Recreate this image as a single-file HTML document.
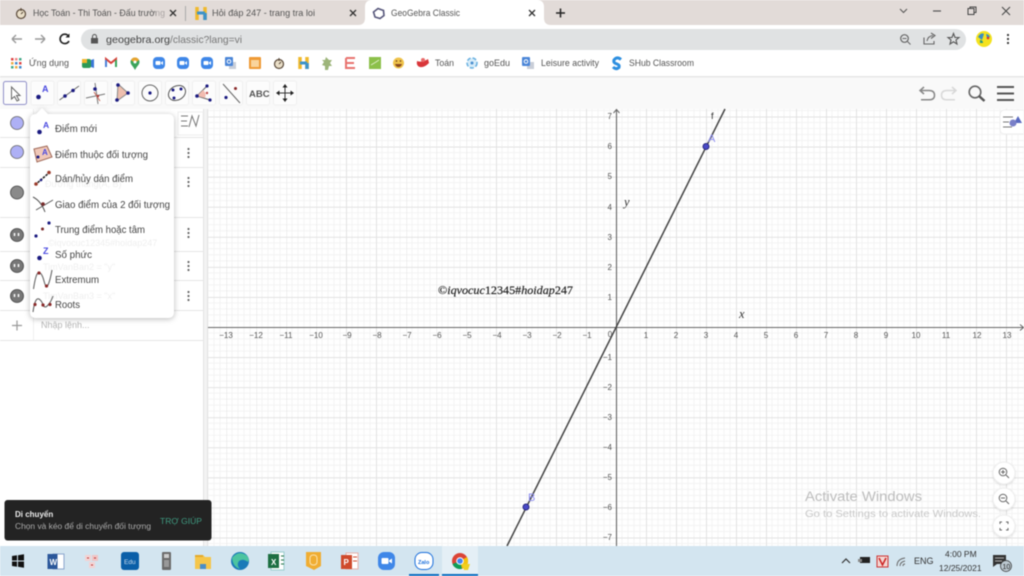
<!DOCTYPE html>
<html lang="vi"><head><meta charset="utf-8"><title>GeoGebra Classic</title>
<style>
html,body{margin:0;padding:0;width:1024px;height:576px;overflow:hidden;background:#fff}
svg{display:block;filter:blur(.5px)}
text{font-family:"Liberation Sans",sans-serif;fill:#555;font-size:9.5px}
.ax text,.ax{font-size:8px;fill:#555;text-anchor:middle}
.ay text{font-size:8px;fill:#555;text-anchor:end}
.bm{font-size:9px;fill:#555}
.m{font-size:10px;fill:#444}
.b{fill:#fcfcfc;stroke:#f0f0f0}
.gh{font-size:9px;fill:#efefef}
</style></head><body>
<svg width="1024" height="576" viewBox="0 0 1024 576" xmlns="http://www.w3.org/2000/svg">
<defs>
<pattern id="g" patternUnits="userSpaceOnUse" x="616" y="327" width="30" height="30.07">
<path d="M6 0V31M12 0V31M18 0V31M24 0V31M0 6H30M0 12H30M0 18H30M0 24H30" stroke="#f3f3f3" stroke-width="1" fill="none"/>
<path d="M.5 0V31M0 .5H30" stroke="#e2e2e2" stroke-width="1" fill="none"/>
</pattern>
</defs>
<rect width="1024" height="576" fill="#fff"/>
<!-- tab strip -->
<rect width="1024" height="25" fill="#e2dbd8"/>
<path d="M358 25q7 0 7-7V7q0-7 7-7H537q7 0 7 7V18q0 7 7 7Z" fill="#fff"/>
<circle cx="21" cy="14" r="4.5" fill="#eadfc8" stroke="#5a4a3a" stroke-width="1.2"/><path d="M21 8V11M21 14L23 12" stroke="#5a4a3a"/>
<text x="33" y="16" textLength="132" lengthAdjust="spacingAndGlyphs">Học Toán - Thi Toán - Đấu trường</text>
<rect x="156" y="5" width="10" height="16" fill="#e2dbd8" opacity=".6"/>
<path d="M170 10L176 16M176 10L170 16" stroke="#333" stroke-width="1.3"/>
<rect x="185" y="6" width="1" height="15" fill="#aaa"/>
<path d="M197 7V20M205 7V20" stroke="#f0b92c" stroke-width="3.5"/><path d="M197 13H205" stroke="#3c93c9" stroke-width="3"/><path d="M205 13V20" stroke="#3c93c9" stroke-width="3.5"/>
<text x="212" y="16" textLength="103" lengthAdjust="spacingAndGlyphs">Hỏi đáp 247 - trang tra loi</text>
<path d="M350 10L356 16M356 10L350 16" stroke="#333" stroke-width="1.3"/>
<path d="M378 8.500L383.500 10.500L384 15.500L380 18.500L375 17L373.500 12Z" fill="#fff" stroke="#56567a" stroke-width="1.600"/>
<text x="391" y="16" textLength="69" lengthAdjust="spacingAndGlyphs">GeoGebra Classic</text>
<path d="M529 10L535 16M535 10L529 16" stroke="#333" stroke-width="1.3"/>
<path d="M560.500 8.500V17.500M556 13H565" stroke="#222" stroke-width="1.500"/>
<path d="M900 9L903.500 12.500L907 9" stroke="#555" fill="none"/>
<path d="M933 11H941" stroke="#555" stroke-width="1.200"/>
<rect x="968" y="8.500" width="6" height="6" fill="none" stroke="#444"/><path d="M970 8.500V7H976V12.500H974" fill="none" stroke="#444"/>
<path d="M1002 7L1010 15M1010 7L1002 15" stroke="#444"/>
<!-- address row -->
<rect y="25" width="1024" height="25" fill="#fff"/>
<path d="M12 39H22M12 39L16 35M12 39L16 43" stroke="#999" stroke-width="1.400" fill="none"/>
<path d="M45 39H35M45 39L41 35M45 39L41 43" stroke="#999" stroke-width="1.400" fill="none"/>
<path d="M68.500 36A4.700 4.700 0 1 0 69 41" stroke="#222" stroke-width="1.600" fill="none"/><path d="M69.500 33.500V37.500H65.500Z" fill="#222"/>
<rect x="81" y="29" width="885" height="21" rx="10.500" fill="#e0e2e3"/>
<rect x="91" y="38" width="7" height="5.500" fill="#555"/><path d="M92.500 38V36.500A2 2 0 0 1 96.500 36.500V38" stroke="#555" fill="none"/>
<text x="106" y="43" style="font-size:10.500px;fill:#444" textLength="64" lengthAdjust="spacingAndGlyphs">geogebra.org</text>
<text x="170" y="43" style="font-size:10.500px;fill:#777" textLength="72" lengthAdjust="spacingAndGlyphs">/classic?lang=vi</text>
<circle cx="904.500" cy="38.500" r="3.800" fill="none" stroke="#666" stroke-width="1.200"/><path d="M907.500 41.500L910.500 44.500M902.500 38.500H906.500" stroke="#666"/>
<path d="M924 37.500V44H934V41M927 41Q928 36 933 35.500M931 33L935 35.500L931 38.500" stroke="#666" stroke-width="1.100" fill="none"/>
<path d="M953.500 33.500L955 37.500L959 37.500L956 40L957 44L953.500 41.800L950 44L951 40L948 37.500L952 37.500Z" fill="none" stroke="#555" stroke-width="1.100"/>
<circle cx="984" cy="39" r="8" fill="#f4e21e"/><path d="M978 37q3-5 6-3l-2 6zM986 34q3 0 4 3l-3 1z" fill="#3a8fc0"/><circle cx="988" cy="38" r="1.300" fill="#d33"/><path d="M980 40q3 0 3 3l-3 0z" fill="#2a9a7a"/>
<circle cx="1008" cy="35" r="1.100" fill="#333"/><circle cx="1008" cy="39" r="1.100" fill="#333"/><circle cx="1008" cy="43" r="1.100" fill="#333"/>
<!-- bookmarks -->
<g><rect x="11" y="58" width="2.500" height="2.500" fill="#d44"/><rect x="15" y="58" width="2.500" height="2.500" fill="#e88"/><rect x="19" y="58" width="2.500" height="2.500" fill="#4a8"/><rect x="11" y="62" width="2.500" height="2.500" fill="#ea4"/><rect x="15" y="62" width="2.500" height="2.500" fill="#48c"/><rect x="19" y="62" width="2.500" height="2.500" fill="#d44"/><rect x="11" y="66" width="2.500" height="2.500" fill="#4a8"/><rect x="15" y="66" width="2.500" height="2.500" fill="#ea4"/><rect x="19" y="66" width="2.500" height="2.500" fill="#48c"/></g>
<text class="bm" x="29" y="66" textLength="40" lengthAdjust="spacingAndGlyphs">Ứng dụng</text>
<rect x="82" y="59" width="9" height="9" rx="2" fill="#2c9a56"/><path d="M82 59h5v4h-5z" fill="#f2b62c"/><path d="M91 60l3-1v9l-3-1z" fill="#3b78d8"/>
<path d="M106 67V59L111 63L116 59V67" fill="none" stroke="#d9423a" stroke-width="2"/><path d="M106 67V60" stroke="#4a7fd8" stroke-width="2"/><path d="M116 67V60" stroke="#3aa45a" stroke-width="2"/>
<path d="M135 70C133 66 130.500 64.500 130.500 62A4.500 4.500 0 0 1 139.500 62C139.500 64.500 137 66 135 70Z" fill="#3aa45a"/><path d="M131 60A4.500 4.500 0 0 1 139 60L135 63Z" fill="#e8a32e"/><circle cx="135" cy="62" r="1.500" fill="#fff"/>
<rect x="153" y="57" width="12" height="12" rx="4" fill="#3f87e8"/><rect x="155.500" y="61" width="5" height="4" rx="1" fill="#fff"/><path d="M161 62.500L163 61V65L161 63.500Z" fill="#fff"/>
<rect x="177" y="57" width="12" height="12" rx="4" fill="#3f87e8"/><rect x="179.500" y="61" width="5" height="4" rx="1" fill="#fff"/><path d="M185 62.500L187 61V65L185 63.500Z" fill="#fff"/>
<rect x="201" y="57" width="12" height="12" rx="4" fill="#3f87e8"/><rect x="203.500" y="61" width="5" height="4" rx="1" fill="#fff"/><path d="M209 62.500L211 61V65L209 63.500Z" fill="#fff"/>
<rect x="229" y="62" width="7" height="7" fill="#c9ced8"/><rect x="225" y="57" width="8" height="9" rx="1" fill="#4b86d8"/><circle cx="229" cy="61.500" r="1.800" fill="none" stroke="#fff"/>
<rect x="249" y="57" width="12" height="12" rx="1" fill="#ef9a35"/><rect x="251" y="60" width="8" height="7" fill="#f9d49c"/>
<circle cx="279" cy="64" r="4.500" fill="#eadfc8" stroke="#5a4a3a" stroke-width="1.200"/><path d="M279 58V61M279 64L281 62" stroke="#5a4a3a"/>
<path d="M300 57V69M307 57V69" stroke="#f0b92c" stroke-width="3.500"/><path d="M300 63H307" stroke="#3c93c9" stroke-width="3"/><path d="M307 63V69" stroke="#3c93c9" stroke-width="3.500"/>
<path d="M326 57L329 60L332 60L330 63L332 66L329 66L328 70H325L325 66L322 65L324 62L322 60L325 60Z" fill="#9db57a"/>
<path d="M346 58H355M346 58V68H355M346 63H354" stroke="#e8736f" stroke-width="2" fill="none"/>
<rect x="369" y="57" width="12" height="12" fill="#8cc04a"/><path d="M371 65L376 62L379 60" stroke="#dfeec8"/>
<circle cx="398.500" cy="63" r="5.500" fill="#efc34a"/><path d="M395 64H402Q401 67 398.500 67Q396 67 395 64Z" fill="#8a4a20"/><circle cx="396.500" cy="61" r=".8" fill="#6a3a20"/><circle cx="400.500" cy="61" r=".8" fill="#6a3a20"/>
<path d="M417 61Q422 63 428 59L429 63Q424 68 420 67Q416 66 417 61Z" fill="#d9363a"/><circle cx="423" cy="60" r="2" fill="#e86a6a"/>
<text class="bm" x="435" y="66" textLength="19" lengthAdjust="spacingAndGlyphs">Toán</text>
<circle cx="472" cy="63" r="5" fill="#d7ecf9" stroke="#68b0e0" stroke-dasharray="4 2" stroke-width="1.500"/><circle cx="472" cy="63" r="1.500" fill="#4a90d0"/>
<text class="bm" x="484" y="66" textLength="26" lengthAdjust="spacingAndGlyphs">goEdu</text>
<rect x="527" y="62" width="7" height="7" fill="#c9ced8"/><rect x="522" y="57" width="8" height="9" rx="1" fill="#4b86d8"/><circle cx="526" cy="61.500" r="1.800" fill="none" stroke="#fff"/>
<text class="bm" x="541" y="66" textLength="58" lengthAdjust="spacingAndGlyphs">Leisure activity</text>
<path d="M621 59.500Q617 56 614 60Q613 63 617 64Q620 65 619 67.500Q616 70 613 67" stroke="#2d8fe0" stroke-width="3" fill="none"/>
<text class="bm" x="629" y="66" textLength="65" lengthAdjust="spacingAndGlyphs">SHub Classroom</text>
<rect y="76" width="1024" height="1.500" fill="#e6e6e6"/>
<!-- toolbar -->
<rect y="77.500" width="1024" height="31.500" fill="#f9f9f9"/>
<rect x="3.500" y="81.500" width="23" height="23" rx="2" fill="#fcfcfc" stroke="#8f8fc8"/>
<rect class="b" x="31" y="81" width="23" height="24" rx="2"/><rect class="b" x="57.500" y="81" width="23" height="24" rx="2"/><rect class="b" x="84.500" y="81" width="23" height="24" rx="2"/><rect class="b" x="111.500" y="81" width="23" height="24" rx="2"/><rect class="b" x="138.500" y="81" width="23" height="24" rx="2"/><rect class="b" x="165.500" y="81" width="23" height="24" rx="2"/><rect class="b" x="192.500" y="81" width="23" height="24" rx="2"/><rect class="b" x="219.500" y="81" width="23" height="24" rx="2"/><rect class="b" x="246.500" y="81" width="23" height="24" rx="2"/><rect class="b" x="273.500" y="81" width="23" height="24" rx="2"/>
<path d="M11.500 87V99L14.500 96.500L17 101L19 100L16.500 95.500H20Z" fill="#fff" stroke="#666"/>
<circle cx="38.500" cy="97" r="2.300" fill="#1a1a80"/><text x="42" y="92" style="font-size:9px;font-weight:bold;fill:#4a4ae0">A</text>
<path d="M59.500 100L79 86" stroke="#666"/><circle cx="65" cy="96" r="1.800" fill="#1a1a80"/><circle cx="73" cy="90.500" r="1.800" fill="#1a1a80"/>
<path d="M86 98L105 94M95 83L98 104" stroke="#777"/><path d="M94 92L100 101" stroke="#c86a5a"/><circle cx="95" cy="89" r="1.800" fill="#1a1a80"/><circle cx="98" cy="96" r="1.200" fill="#a33"/>
<path d="M118 84L128 93L117 101Z" fill="#eebfae" stroke="#888"/><circle cx="118" cy="85" r="1.800" fill="#1a1a80"/><circle cx="128" cy="93" r="1.800" fill="#1a1a80"/><circle cx="117" cy="100" r="1.800" fill="#1a1a80"/>
<circle cx="150" cy="93" r="8" fill="none" stroke="#666"/><circle cx="150" cy="93" r="1.600" fill="#1a1a80"/>
<ellipse cx="177" cy="93" rx="9" ry="7" transform="rotate(-30 177 93)" fill="none" stroke="#555"/><circle cx="173" cy="90" r="1.500" fill="#1a1a80"/><circle cx="181" cy="89" r="1.500" fill="#1a1a80"/><circle cx="174" cy="98" r="1.500" fill="#1a1a80"/>
<path d="M197 96L207 86M197 96L210 100" stroke="#666"/><path d="M203 90Q207 93 205 98L197 96Z" fill="#f2bcb0"/><circle cx="197" cy="96" r="1.800" fill="#1a1a80"/><circle cx="207" cy="86" r="1.600" fill="#1a1a80"/><circle cx="210" cy="100" r="1.600" fill="#1a1a80"/><circle cx="207" cy="93" r="1.200" fill="#b44"/>
<path d="M223 84L240 103" stroke="#666"/><circle cx="235.500" cy="88.500" r="1.500" fill="#8a2a2a"/><circle cx="226" cy="97.500" r="1.600" fill="#1a1a80"/>
<text x="249" y="97" style="font-size:9.500px;font-weight:bold;fill:#555">ABC</text>
<path d="M285 86V100M278 93H292" stroke="#333"/><path d="M285 84L282.500 87.500H287.500ZM285 102L282.500 98.500H287.500ZM276 93L279.500 90.500V95.500ZM294 93L290.500 90.500V95.500Z" fill="#222"/>
<path d="M920 90.500H929Q934.500 90.500 934.500 95.200Q934.500 99.800 929 99.800H921M924 87L920 90.500L924 94" stroke="#888" stroke-width="1.500" fill="none"/>
<path d="M956 90.500H947Q941.500 90.500 941.500 95.200Q941.500 99.800 947 99.800H955M952 87L956 90.500L952 94" stroke="#d8d8d8" stroke-width="1.500" fill="none"/>
<circle cx="975" cy="92" r="5.800" fill="none" stroke="#666" stroke-width="1.600"/><path d="M979 96L984.500 101" stroke="#555" stroke-width="2.500"/>
<path d="M997 87H1014M997 93.500H1014M997 100H1014" stroke="#555" stroke-width="1.900"/>
<!-- graphics -->
<rect x="208" y="109" width="816" height="437" fill="#fff"/>
<rect x="208" y="109" width="816" height="437" fill="url(#g)"/>
<path d="M208 327.500H1024" stroke="#666" stroke-width="1.100"/><path d="M616.500 109V546" stroke="#666" stroke-width="1.100"/>
<path d="M613.500 113L616.500 109.500L619.500 113M1020 324.500L1023.500 327.500L1020 330.500" fill="none" stroke="#666"/>
<path d="M725 109L507 546" stroke="#444" stroke-width="1.500"/>
<circle cx="706" cy="146.500" r="3" fill="#4a4ac8" stroke="#2a2a80"/><circle cx="526" cy="507" r="3" fill="#4a4ac8" stroke="#2a2a80"/>
<text x="708" y="142" style="font-size:11px;fill:#8c8cf0">A</text><text x="528" y="501" style="font-size:11px;fill:#8c8cf0">B</text>
<text x="711" y="119" style="font-size:9.500px;fill:#333">f</text>
<text x="624" y="206" style="font-size:12.500px;font-family:'Liberation Serif',serif;font-style:italic;fill:#333">y</text>
<text x="739" y="318" style="font-size:12.500px;font-family:'Liberation Serif',serif;font-style:italic;fill:#333">x</text>
<text x="438" y="294" textLength="135" lengthAdjust="spacingAndGlyphs" style="font-size:12px;font-family:'Liberation Serif',serif;fill:#222;stroke:#222;stroke-width:.2">©<tspan font-style="italic">iqvocuc</tspan>12345#<tspan font-style="italic">hoidap</tspan>247</text>
<g class="ax">
<text x="226" y="338">−13</text><text x="256" y="338">−12</text><text x="286" y="338">−11</text><text x="316" y="338">−10</text><text x="347" y="338">−9</text><text x="377" y="338">−8</text><text x="407" y="338">−7</text><text x="437" y="338">−6</text><text x="467" y="338">−5</text><text x="497" y="338">−4</text><text x="527" y="338">−3</text><text x="557" y="338">−2</text><text x="587" y="338">−1</text><text x="610" y="337">0</text><text x="646" y="338">1</text><text x="676" y="338">2</text><text x="706" y="338">3</text><text x="736" y="338">4</text><text x="766" y="338">5</text><text x="796" y="338">6</text><text x="826" y="338">7</text><text x="856" y="338">8</text><text x="886" y="338">9</text><text x="916" y="338">10</text><text x="946" y="338">11</text><text x="977" y="338">12</text><text x="1007" y="338">13</text>
</g>
<g class="ay">
<text x="612" y="119">7</text><text x="612" y="149">6</text><text x="612" y="179">5</text><text x="612" y="210">4</text><text x="612" y="240">3</text><text x="612" y="270">2</text><text x="612" y="300">1</text><text x="612" y="360">−1</text><text x="612" y="390">−2</text><text x="612" y="420">−3</text><text x="612" y="450">−4</text><text x="612" y="480">−5</text><text x="612" y="510">−6</text><text x="612" y="540">−7</text>
</g>
<!-- style bar btn -->
<path d="M1024 110H1005Q1000 110 1000 115V129Q1000 134 1005 134H1024Z" fill="#fff" stroke="#eee"/>
<path d="M1003 117H1013M1003 122H1009M1003 127H1012" stroke="#777"/><path d="M1018 116L1022 123H1014Z" fill="#5a6ac0"/><circle cx="1013" cy="123" r="3.500" fill="#7a80c8"/>
<!-- zoom buttons -->
<g fill="#fff" stroke="#eee" style="filter:drop-shadow(0 1px 1px rgba(0,0,0,.12))"><circle cx="1004" cy="473" r="11"/><circle cx="1004" cy="499" r="11"/><circle cx="1004" cy="526" r="11"/></g>
<g fill="none" stroke="#666"><circle cx="1003" cy="472" r="3.800"/><path d="M1006 475L1009 478M1001 472H1005M1003 470V474"/><circle cx="1003" cy="498" r="3.800"/><path d="M1006 501L1009 504M1001 498H1005"/><path d="M1000 524V522H1002M1006 522H1008V524M1008 528V530H1006M1002 530H1000V528"/></g>
<text x="805" y="501" style="font-size:14px;fill:#bdbdbd" textLength="117" lengthAdjust="spacingAndGlyphs">Activate Windows</text>
<text x="805" y="517" style="font-size:10.500px;fill:#c8c8c8" textLength="176" lengthAdjust="spacingAndGlyphs">Go to Settings to activate Windows.</text>
<!-- algebra view -->
<rect x="0" y="109" width="204" height="437" fill="#fff"/>
<rect x="204" y="109" width="4" height="437" fill="#f3f3f3"/><path d="M203.500 109V546M207.500 109V546" stroke="#e4e4e4"/>
<path d="M0 137.500H204M0 167.500H204M0 217.500H204M0 251.500H204M0 280.500H204M0 310.500H204M0 340.500H204" stroke="#e6e6e6"/>
<path d="M33.500 109V340" stroke="#efefef"/>
<rect x="178" y="112" width="25" height="23" fill="#fff" stroke="#eee"/>
<path d="M181 116H188M181 121H187M181 126H188M189 127L192 116L196 126L199 115" stroke="#777" fill="none"/>
<circle cx="17" cy="123" r="6.500" fill="#aeb0f5" stroke="#666" stroke-width=".8"/>
<circle cx="17" cy="152" r="6.500" fill="#aeb0f5" stroke="#666" stroke-width=".8"/>
<circle cx="17" cy="192.500" r="6.500" fill="#8a8a8a" stroke="#444" stroke-width=".8"/>
<circle cx="17" cy="235" r="6.500" fill="#777" stroke="#444" stroke-width=".8"/>
<circle cx="17" cy="266" r="6.500" fill="#777" stroke="#444" stroke-width=".8"/>
<circle cx="17" cy="296" r="6.500" fill="#777" stroke="#444" stroke-width=".8"/>
<g stroke="#fff" stroke-width="1.500" fill="none"><path d="M14.500 233V236M18.500 233V236M14.500 264V267M18.500 264V267M14.500 294V297M18.500 294V297"/></g>
<g fill="#666"><circle cx="188.500" cy="149" r="1.100"/><circle cx="188.500" cy="153" r="1.100"/><circle cx="188.500" cy="157" r="1.100"/><circle cx="188.500" cy="178" r="1.100"/><circle cx="188.500" cy="182" r="1.100"/><circle cx="188.500" cy="186" r="1.100"/><circle cx="188.500" cy="229" r="1.100"/><circle cx="188.500" cy="233" r="1.100"/><circle cx="188.500" cy="237" r="1.100"/><circle cx="188.500" cy="262" r="1.100"/><circle cx="188.500" cy="266" r="1.100"/><circle cx="188.500" cy="270" r="1.100"/><circle cx="188.500" cy="292" r="1.100"/><circle cx="188.500" cy="296" r="1.100"/><circle cx="188.500" cy="300" r="1.100"/></g>
<path d="M12 325.500H22M17 320.500V330.500" stroke="#999" stroke-width="1.200"/>
<text x="41" y="328" style="font-size:9px;fill:#b5b5b5">Nhập lệnh...</text>
<!-- menu -->
<path d="M36 114L42 108L48 114H168Q174 114 174 120V312Q174 318 168 318H36Q30 318 30 312V120Q30 114 36 114Z" fill="#fff" style="filter:drop-shadow(0 1px 3px rgba(0,0,0,.28))"/>
<text class="gh" x="45" y="187">Đường thẳng(A, B)</text>
<text class="gh" x="48" y="246">©iqvocuc12345#hoidap247</text>
<text class="gh" x="43" y="270">TimVanBan2 = "y"</text>
<text class="gh" x="43" y="299">TimVanBan3 = "x"</text>
<circle cx="39.500" cy="132" r="2.300" fill="#1a1a80"/><text x="43" y="128" style="font-size:8.500px;font-weight:bold;fill:#4a4ae0">A</text>
<text class="m" x="55" y="132" textLength="42" lengthAdjust="spacingAndGlyphs">Điểm mới</text>
<path d="M34 149L47 146L52 157L37 162Z" fill="#f0c8b8" stroke="#a06a5a"/><circle cx="38" cy="157" r="1.500" fill="#1a1a80"/><text x="42" y="155" style="font-size:8px;font-weight:bold;fill:#4a4ae0">A</text>
<text class="m" x="55" y="158" textLength="93" lengthAdjust="spacingAndGlyphs">Điểm thuộc đối tượng</text>
<path d="M35 185L50 172" stroke="#222" stroke-width="1.600" stroke-dasharray="2.500 1"/><circle cx="36" cy="184" r="1.800" fill="#9a3a2a"/><circle cx="49" cy="172.500" r="1.800" fill="#9a3a2a"/><circle cx="41" cy="180" r="1.300" fill="#1a1a80"/>
<text class="m" x="55" y="182" textLength="78" lengthAdjust="spacingAndGlyphs">Dán/hủy dán điểm</text>
<path d="M33 197Q41 201 45 212M36 210L53 200" stroke="#555" fill="none"/><circle cx="43" cy="204" r="1.800" fill="#7a2a2a"/>
<text class="m" x="55" y="208" textLength="115" lengthAdjust="spacingAndGlyphs">Giao điểm của 2 đối tượng</text>
<circle cx="36" cy="236" r="1.600" fill="#1a1a80"/><circle cx="42.500" cy="229" r="1.500" fill="#7a2a2a"/><circle cx="49" cy="223" r="1.600" fill="#1a1a80"/>
<text class="m" x="55" y="233" textLength="90" lengthAdjust="spacingAndGlyphs">Trung điểm hoặc tâm</text>
<circle cx="39.500" cy="258" r="2.300" fill="#1a1a80"/><text x="43" y="254" style="font-size:9px;font-weight:bold;fill:#4a4ae0">Z</text>
<text class="m" x="55" y="258" textLength="37" lengthAdjust="spacingAndGlyphs">Số phức</text>
<path d="M33.500 289Q36 272 39 272.500Q42 273 44 281Q46 289 48 285Q50 281 52 270" stroke="#666" stroke-width="1.100" fill="none"/><circle cx="39" cy="273" r="1.600" fill="#8a2a2a"/><circle cx="46.500" cy="286" r="1.600" fill="#8a2a2a"/>
<text class="m" x="55" y="283" textLength="44" lengthAdjust="spacingAndGlyphs">Extremum</text>
<path d="M33 312Q35 297 39 299Q42 301 43 305Q45 309 48 305Q51 302 53 296" stroke="#666" stroke-width="1.100" fill="none"/><circle cx="35" cy="304.500" r="1.600" fill="#8a2a2a"/><circle cx="43" cy="305" r="1.600" fill="#8a2a2a"/><circle cx="50" cy="304.500" r="1.600" fill="#8a2a2a"/>
<text class="m" x="55" y="308" textLength="25" lengthAdjust="spacingAndGlyphs">Roots</text>
<!-- snackbar -->
<rect x="4.500" y="500" width="207" height="40.500" rx="3" fill="#232323"/>
<text x="15" y="517" style="font-size:8px;font-weight:bold;fill:#eee">Di chuyển</text>
<text x="15" y="529" style="font-size:8px;fill:#aaa" textLength="136" lengthAdjust="spacingAndGlyphs">Chọn và kéo để di chuyển đối tượng</text>
<text x="160" y="524" style="font-size:8.500px;fill:#3f9a80" textLength="42" lengthAdjust="spacingAndGlyphs">TRỢ GIÚP</text>
<!-- taskbar -->
<rect y="546" width="1024" height="30" fill="#d3e5f0"/>
<g fill="#111"><path d="M12 556L17 555.300V560.500H12ZM18 555.200L24 554.300V560.500H18ZM12 561.500H17V566.700L12 566ZM18 561.500H24V567.700L18 566.800Z"/></g>
<rect x="53" y="554" width="11" height="15" fill="#fff" stroke="#8aa5cc"/><rect x="47.500" y="554" width="10" height="15" fill="#2b579a"/><text x="49.500" y="565" style="font-size:8px;font-weight:bold;fill:#fff">W</text>
<rect x="85" y="555" width="6" height="6" fill="#f3d3d3"/><rect x="92" y="555" width="6" height="6" fill="#f0c4c4"/><rect x="89" y="562" width="6" height="6" fill="#f3d3d3"/><path d="M87 558h2M94 558h2M91 565h2" stroke="#b33"/>
<rect x="121" y="552" width="18" height="18" rx="3" fill="#0a5fa8"/><text x="124" y="564" style="font-size:6.500px;fill:#cde">Edu</text>
<rect x="162" y="552" width="9" height="18" rx="1" fill="#6b6b6b"/><rect x="164" y="554" width="5" height="4" fill="#ccc"/><rect x="164" y="560" width="5" height="7" fill="#999"/>
<path d="M195 555H203L205 557H211V569H195Z" fill="#f5c64a"/><rect x="200" y="564" width="6" height="5" fill="#4a8ec8"/><path d="M195 555H203V557H195Z" fill="#e4a92a"/>
<circle cx="240" cy="561" r="9" fill="#1a7ab8"/><path d="M232 558Q238 550 246 555Q250 558 248 562Q243 558 239 561Q236 565 240 569Q233 567 232 558Z" fill="#4cc4a0"/>
<rect x="271" y="552" width="13" height="18" fill="#fff" stroke="#9cc"/><rect x="268" y="554" width="11" height="14" fill="#1d6f42"/><text x="271" y="565" style="font-size:8px;font-weight:bold;fill:#fff">X</text><path d="M281 556H284M281 560H284M281 564H284" stroke="#1d6f42"/>
<path d="M306 552H321V566L314 570L306 566Z" fill="#f0ad32"/><rect x="310" y="555" width="7" height="10" rx="3" fill="none" stroke="#fbe3b0"/>
<rect x="346" y="553" width="12" height="16" fill="#fff" stroke="#e8b0a8"/><rect x="341" y="555" width="11" height="14" fill="#cf4a2c"/><text x="343.500" y="565" style="font-size:8px;font-weight:bold;fill:#fff">P</text><path d="M353 557H357M353 561H357" stroke="#cf4a2c"/>
<rect x="378" y="552" width="17" height="18" rx="6" fill="#3f87e8"/><rect x="381.500" y="558" width="7" height="6" rx="1" fill="#fff"/><path d="M389 560.500L392 558.500V563.500L389 561.500Z" fill="#fff"/>
<rect x="409" y="574" width="30" height="2" fill="#0a6cbf"/>
<rect x="415" y="552.500" width="18" height="17" rx="7" fill="#fff" stroke="#1b6fdc"/><text x="418" y="564" style="font-size:5.500px;font-weight:bold;fill:#1b6fdc">Zalo</text>
<rect x="442" y="546" width="36" height="30" fill="#e4eff6"/><rect x="442" y="574" width="36" height="2" fill="#0a6cbf"/>
<circle cx="460" cy="561" r="8" fill="#db4437"/><path d="M460 561L467 557A8 8 0 0 1 462 568.800Z" fill="#f4c20d"/><path d="M460 561L462 568.800A8 8 0 0 1 452.500 564Z" fill="#0f9d58"/><circle cx="460" cy="561" r="3.300" fill="#4285f4" stroke="#fff"/><path d="M462 564H470L468 570H464Z" fill="#f0d020"/>
<path d="M842 563L846 559L850 563" stroke="#333" stroke-width="1.200" fill="none"/>
<rect x="860" y="557" width="10" height="6" fill="#222"/><rect x="858" y="559" width="4" height="3" fill="#888"/>
<rect x="877" y="556" width="11" height="11" fill="#f3d6d2" stroke="#c33"/><path d="M879 558L882.500 565L886 558" stroke="#c22" stroke-width="1.500" fill="none"/>
<path d="M897 566Q897 559 905 558M900 566Q900 562 905 561M903 566Q903 564 905 564" stroke="#666" fill="none"/>
<text x="914" y="564" style="font-size:9px;fill:#333">ENG</text>
<text x="945" y="557" style="font-size:8.500px;fill:#333">4:00 PM</text>
<text x="939" y="571" style="font-size:8.500px;fill:#333">12/25/2021</text>
<path d="M993 555H1006V564H997L993 567Z" fill="#333"/><path d="M995 558H1004M995 561H1002" stroke="#ddd" stroke-width=".8"/>
<circle cx="1006" cy="566" r="5.500" fill="#bcc8d0" stroke="#333" stroke-width=".7"/><text x="1002.500" y="569" style="font-size:7px;fill:#222">10</text>
</svg>
</body></html>
